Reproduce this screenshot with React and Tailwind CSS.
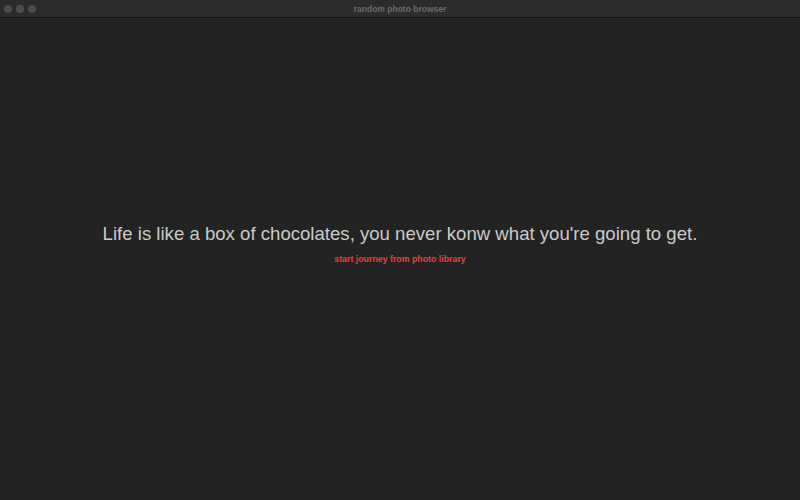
export default function App() {
  return (
    <div className="w-[800px] h-[500px] flex flex-col bg-[#232323] overflow-hidden" style={{ fontFamily: '"Liberation Sans", Arial, sans-serif' }}>
      <div className="h-[18px] shrink-0 bg-[#2c2c2c] border-b border-[#141414] flex items-center relative">
        <div className="flex gap-[4px] pl-[4px] items-center pt-[1px]">
          <div className="w-[8px] h-[8px] rounded-full bg-[#4d4d4d]"></div>
          <div className="w-[8px] h-[8px] rounded-full bg-[#4d4d4d]"></div>
          <div className="w-[8px] h-[8px] rounded-full bg-[#4d4d4d]"></div>
        </div>
        <div className="absolute inset-0 flex items-center justify-center pt-[1px] text-[8.5px] font-bold text-[#6a6a6a]">random photo browser</div>
      </div>
      <div className="flex-1 flex flex-col items-center justify-center pb-[28px]">
        <div className="text-[18.6px] text-[#cacaca] leading-[22px]">Life is like a box of chocolates, you never konw what you're going to get.</div>
        <div className="text-[8.8px] font-bold text-[#e0433d] mt-[8px]">start journey from photo library</div>
      </div>
    </div>
  );
}
